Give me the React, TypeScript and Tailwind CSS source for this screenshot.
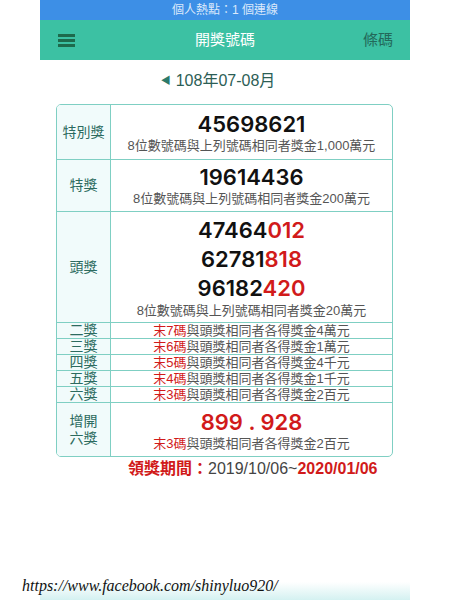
const FONT = { fontFamily: '"Liberation Sans", "Noto Sans CJK TC", sans-serif' };
const NUM = { fontFamily: 'Inter, "Liberation Sans", sans-serif' };

const SMALL_ROWS = [
  { label: '二獎', tail: '末7碼', prize: '4萬元' },
  { label: '三獎', tail: '末6碼', prize: '1萬元' },
  { label: '四獎', tail: '末5碼', prize: '4千元' },
  { label: '五獎', tail: '末4碼', prize: '1千元' },
  { label: '六獎', tail: '末3碼', prize: '2百元' },
];

const HEAD_NUMBERS = [
  ['47464', '012'],
  ['62781', '818'],
  ['96182', '420'],
];

function Label({ children }: { children: React.ReactNode }) {
  return (
    <div className="w-[54px] shrink-0 flex items-center justify-center bg-[#f1fbfb] border-r border-[#7fcfc3] text-[#2c6b5f] text-[14px] leading-[17px] text-center">
      {children}
    </div>
  );
}

export default function App() {
  return (
    <div className="w-[450px] h-[600px] bg-white relative overflow-hidden" style={FONT}>
      <div className="w-[370px] mx-auto">
        {/* status bar */}
        <div className="h-[20px] bg-[#3d8fe6] text-[#dbe9fb] text-[12px] flex items-center justify-center">
          個人熱點：1 個連線
        </div>

        {/* nav bar */}
        <div className="h-[40px] bg-[#3cc1a3] grid grid-cols-3 items-center px-[17px]">
          <div className="flex flex-col gap-[2px] w-[17px] ml-[1px]">
            <span className="h-[3px] bg-[#1d6a4c] block" />
            <span className="h-[3px] bg-[#1d6a4c] block" />
            <span className="h-[3px] bg-[#1d6a4c] block" />
          </div>
          <div className="text-white text-[15px] text-center">開獎號碼</div>
          <div className="text-[#23695a] text-[15px] text-right">條碼</div>
        </div>

        {/* month */}
        <div className="flex items-center justify-center mt-[10px] text-[#2c5e55] text-[16px] leading-[22px] pr-[14px]">
          <span className="text-[10px] text-[#2c7a6a] mr-[5px]">◀</span>
          108年07-08月
        </div>

        {/* table */}
        <div className="mx-[16px] mt-[12px] w-[337px] border border-[#7fcfc3] rounded-[5px] overflow-hidden">
          <div className="flex h-[55px] border-b border-[#7fcfc3]">
            <Label>特別獎</Label>
            <div className="flex-1 flex flex-col items-center justify-center">
              <div className="text-[22px] leading-[26px] font-semibold text-[#111]" style={NUM}>45698621</div>
              <div className="text-[13px] leading-[17px] text-[#555]">8位數號碼與上列號碼相同者獎金1,000萬元</div>
            </div>
          </div>

          <div className="flex h-[52px] border-b border-[#7fcfc3]">
            <Label>特獎</Label>
            <div className="flex-1 flex flex-col items-center justify-center">
              <div className="text-[22px] leading-[26px] font-semibold text-[#111]" style={NUM}>19614436</div>
              <div className="text-[13px] leading-[17px] text-[#555]">8位數號碼與上列號碼相同者獎金200萬元</div>
            </div>
          </div>

          <div className="flex h-[111px] border-b border-[#7fcfc3]">
            <Label>頭獎</Label>
            <div className="flex-1 flex flex-col items-center justify-center">
              {HEAD_NUMBERS.map(([a, b]) => (
                <div key={a} className="text-[22px] leading-[29px] font-semibold text-[#111]" style={NUM}>
                  {a}
                  <span className="text-[#d11a1a]">{b}</span>
                </div>
              ))}
              <div className="text-[13px] leading-[16px] text-[#555]">8位數號碼與上列號碼相同者獎金20萬元</div>
            </div>
          </div>

          {SMALL_ROWS.map((r) => (
            <div key={r.label} className="flex h-[16px] border-b border-[#7fcfc3]">
              <Label>{r.label}</Label>
              <div className="flex-1 flex items-center justify-center text-[13px] leading-[15px] text-[#555]">
                <span className="text-[#d11a1a]">{r.tail}</span>與頭獎相同者各得獎金{r.prize}
              </div>
            </div>
          ))}

          <div className="flex h-[53px]">
            <Label>
              增開
              <br />
              六獎
            </Label>
            <div className="flex-1 flex flex-col items-center justify-center">
              <div className="text-[22px] leading-[28px] font-semibold text-[#d11a1a] whitespace-pre" style={NUM}>899 . 928</div>
              <div className="text-[13px] leading-[16px] text-[#555]">
                <span className="text-[#d11a1a]">末3碼</span>與頭獎相同者各得獎金2百元
              </div>
            </div>
          </div>
        </div>

        {/* claim period */}
        <div className="mt-[2px] pl-[88px] text-[16px] leading-[20px] text-[#444]">
          <span className="text-[#d11a1a] font-bold">領獎期間：</span>
          2019/10/06~
          <span className="text-[#d11a1a] font-bold">2020/01/06</span>
        </div>
      </div>

      {/* footer watermark */}
      <div className="absolute left-[40px] bottom-0 w-[370px] h-[18px] bg-gradient-to-b from-white to-[#d4f1f1]" />
      <div
        className="absolute left-[22px] bottom-[2px] text-[16px] italic text-[#111]"
        style={{ fontFamily: '"Liberation Serif", serif' }}
      >
        https://www.facebook.com/shinyluo920/
      </div>
    </div>
  );
}
